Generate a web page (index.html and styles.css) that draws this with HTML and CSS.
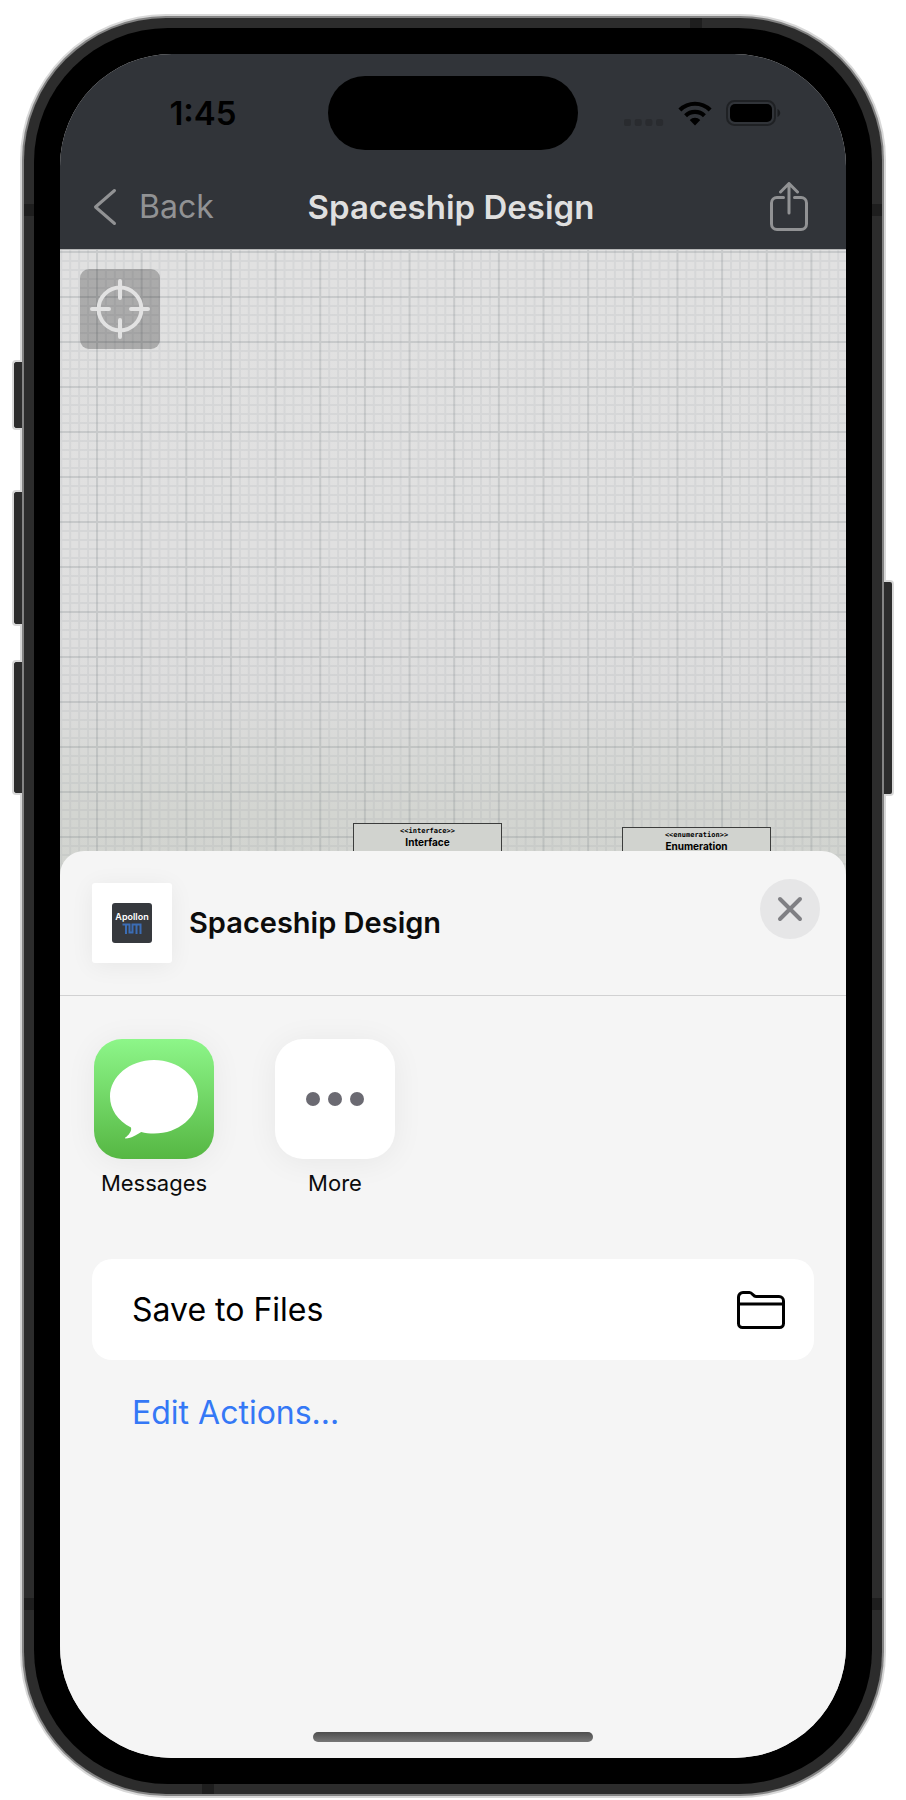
FILE: index.html
```html
<!DOCTYPE html>
<html lang="en">
<head>
<meta charset="utf-8">
<meta name="viewport" content="width=device-width, initial-scale=1">
<title>Spaceship Design</title>
<link rel="stylesheet" href="styles.css">
</head>
<body>
<div class="phone">
  <span class="key key-action"></span>
  <span class="key key-up"></span>
  <span class="key key-down"></span>
  <span class="key key-power"></span>
  <div class="rim"><div class="edge"><div class="frame">
    <span class="band band-left-top"></span>
    <span class="band band-right-top"></span>
    <span class="band band-left-bottom"></span>
    <span class="band band-right-bottom"></span>
    <span class="band band-top"></span>
    <span class="band band-bottom"></span>
    <div class="bezel"><div class="screen">
      <header class="topbar">
        <div class="status">
          <time class="clock">1:45</time>
          <span class="island"></span>
          <div class="indicators">
            <svg class="signal" viewBox="0 0 40 7" width="40" height="7" aria-hidden="true"><rect width="7" height="7" rx="2"/><rect x="10.7" width="7" height="7" rx="2"/><rect x="21.4" width="7" height="7" rx="2"/><rect x="32.1" width="7" height="7" rx="2"/></svg>
            <svg viewBox="0 0 34 25" width="34" height="25" aria-hidden="true"><path d="M.4 7.5A24 24 0 0 1 33.6 7.5L30.7 10.4A19.5 19.5 0 0 0 3.300 10.4ZM6.100 13.200A15.600 15.600 0 0 1 27.900 13.200L25 16.200A11.500 11.500 0 0 0 9 16.200ZM11.700 18.900A7.600 7.600 0 0 1 22.300 18.900L17 24.600Z"/></svg>
            <svg viewBox="0 0 55 26" width="55" height="26" aria-hidden="true"><rect x="1" y="1" width="48" height="24" rx="7.500" fill="none" stroke="#1f2124" stroke-width="2"/><rect x="4" y="4" width="42" height="18" rx="5"/><path d="M51.500 9v8c3.600-1.500 3.600-6.500 0-8z" fill="#1a1c1f"/></svg>
          </div>
        </div>
        <nav class="nav">
          <button class="back" type="button">
            <svg viewBox="0 0 24 38" width="24" height="38" aria-hidden="true"><path d="M21.500 2.500 2.500 19l19 16.500"/></svg>
            Back
          </button>
          <h1 class="title">Spaceship Design</h1>
          <button class="share" type="button" aria-label="Share">
            <svg viewBox="0 0 40 50" width="40" height="50" aria-hidden="true"><path d="M14.500 15.500H8A5.500 5.500 0 0 0 2.500 21v21A5.500 5.500 0 0 0 8 47.500h24a5.500 5.500 0 0 0 5.500-5.500V21A5.500 5.500 0 0 0 32 15.500h-6.500M20 31V2M11.500 10 20 1.500l8.500 8.500"/></svg>
          </button>
        </nav>
      </header>

      <main class="canvas">
        <svg class="grid" width="100%" height="100%" aria-hidden="true">
          <defs>
            <pattern id="minor" x="36" y="46" width="44.650" height="45" patternUnits="userSpaceOnUse"><path d="M0 10H45M0 19H45M0 28H45M0 37H45M9.930 0V45M18.860 0V45M27.790 0V45M36.720 0V45" stroke="#88929a" stroke-opacity=".13" stroke-width="2"/></pattern>
            <pattern id="major" x="36" y="46" width="44.650" height="45" patternUnits="userSpaceOnUse"><path d="M0 1H45M1 0V45" stroke="#7f888c" stroke-opacity=".26" stroke-width="2"/></pattern>
          </defs>
          <rect width="100%" height="100%" fill="url(#minor)"/>
          <rect width="100%" height="100%" fill="url(#major)"/>
        </svg>
        <button class="locate" type="button" aria-label="Center diagram">
          <svg viewBox="0 0 60 60" width="60" height="60" aria-hidden="true"><circle cx="30" cy="30" r="21.400"/><path d="M30 2v17M30 41v17M2 30h17M41 30h17"/></svg>
        </button>
        <div class="node node-interface"><span class="stereotype">&lt;&lt;interface&gt;&gt;</span><span class="name">Interface</span></div>
        <div class="node node-enumeration"><span class="stereotype">&lt;&lt;enumeration&gt;&gt;</span><span class="name">Enumeration</span></div>
      </main>

      <section class="sheet" aria-label="Share sheet">
        <div class="sheet-head">
          <div class="thumb"><div class="app-logo">
            <span class="app-name">Apollon</span>
            <svg viewBox="0 0 20 11" width="20" height="11" aria-label="TUM"><path d="M.5 1.500H7.500V9.500H10.500V1.500H18.500V11M4 1.500V11M14.500 1.500V11"/></svg>
          </div></div>
          <h2 class="sheet-title">Spaceship Design</h2>
          <button class="close" type="button" aria-label="Close">
            <svg viewBox="0 0 28 28" width="28" height="28" aria-hidden="true"><path d="M4 4l20 20M24 4 4 24"/></svg>
          </button>
        </div>
        <div class="apps">
          <button class="app" type="button">
            <span class="tile tile-messages"><svg viewBox="0 0 120 120" width="120" height="120" aria-hidden="true"><path d="M60 21c24.500 0 44 16.500 44 36.700S84.500 94.500 60 94.500c-4.500 0-8.800-.5-12.800-1.500C43 95.500 38 99 31.500 99.500c-.6 0-.7-.5-.2-.9 3.200-2.400 6.700-6.200 5.700-10.100C23.500 81.500 16 70 16 57.700 16 37.500 35.500 21 60 21z" fill="#fff"/></svg></span>
            Messages
          </button>
          <button class="app" type="button">
            <span class="tile"><svg viewBox="0 0 120 120" width="120" height="120" fill="#6b6a72" aria-hidden="true"><circle cx="38" cy="60" r="7"/><circle cx="60" cy="60" r="7"/><circle cx="82" cy="60" r="7"/></svg></span>
            More
          </button>
        </div>
        <div class="actions">
          <button class="save" type="button">
            Save to Files
            <svg viewBox="0 0 48 38" width="48" height="38" aria-hidden="true"><path d="M1.500 13V6A4.500 4.500 0 0 1 6 1.500h6.500c3 0 3.500 4 6.500 4h23a4.500 4.500 0 0 1 4.500 4.500v22.500a4 4 0 0 1-4 4h-37a4 4 0 0 1-4-4zM1.500 13h45"/></svg>
          </button>
          <button class="edit" type="button">Edit Actions...</button>
        </div>
        <div class="home"></div>
      </section>
    </div></div>
  </div></div></div>
</div>
</body>
</html>
```
FILE: styles.css
```css
* { box-sizing: border-box; }

body {
  margin: 0;
  background: #fff;
  font-family: Inter, "Liberation Sans", sans-serif;
}

button {
  margin: 0;
  padding: 0;
  border: 0;
  background: none;
  color: inherit;
  font: inherit;
  cursor: pointer;
}

svg { display: block; flex: none; }
h1, h2 { margin: 0; font-weight: 600; }

/* Device body */
.phone {
  position: relative;
  display: flex;
  min-height: 100vh;
  padding: 14px 20px 2px;
}

.rim, .edge, .frame, .bezel, .screen { display: flex; flex: 1; min-width: 0; }
.rim { padding: 2px; border-radius: 146px; background: #d8d8d8; }
.edge { padding: 2px; border-radius: 144px; background: #848484; }
.frame { position: relative; padding: 10px; border-radius: 142px; background: #2c2c2c; }
.bezel { position: relative; padding: 26px; border-radius: 134px; background: #000; }

.screen {
  flex-direction: column;
  border-radius: 112px;
  overflow: hidden;
  background: #dfdfdf;
}

.key {
  position: absolute;
  left: 12px;
  width: 10px;
  border: 2px solid #d8d8d8;
  border-right: 0;
  border-radius: 4px 0 0 4px;
  background: #2c2c2c;
}
.key-action { top: 360px; height: 70px; }
.key-up { top: 490px; height: 136px; }
.key-down { top: 660px; height: 135px; }
.key-power {
  top: 580px;
  right: 12px;
  left: auto;
  height: 216px;
  border-right: 2px solid #d8d8d8;
  border-left: 0;
  border-radius: 0 4px 4px 0;
}
.key { z-index: 1; }

.band { position: absolute; width: 12px; height: 12px; background: #1e1e1e; }
.band-left-top { top: 186px; left: 0; }
.band-right-top { top: 186px; right: 0; }
.band-left-bottom { bottom: 184px; left: 0; }
.band-right-bottom { right: 0; bottom: 184px; }
.band-top { top: 0; right: 180px; }
.band-bottom { bottom: 0; left: 178px; }

/* Status and navigation */
.topbar {
  flex: none;
  background: #313439;
}

.status {
  display: grid;
  grid-template-columns: 1fr 250px 1fr;
  align-items: center;
  padding-top: 22px;
}

.clock {
  padding-left: 18px;
  color: #000;
  font-size: 33px;
  font-weight: 600;
  line-height: 40px;
  text-align: center;
}

.island { height: 74px; border-radius: 37px; background: #000; }

.indicators {
  display: flex;
  align-items: center;
  gap: 14px;
  padding-left: 46px;
}
.signal { align-self: flex-end; fill: #292b2f; }

.nav {
  display: grid;
  grid-template-columns: 1fr auto 1fr;
  align-items: center;
  height: 99px;
  padding: 14px 37px 0 33px;
  color: #dfdfdf;
}

.back {
  display: flex;
  align-items: center;
  gap: 22px;
  justify-self: start;
  color: #919294;
  font-size: 32px;
  line-height: 40px;
}
.back svg, .share svg {
  fill: none;
  stroke: #919294;
  stroke-width: 3;
  stroke-linecap: round;
  stroke-linejoin: round;
}
.title { font-size: 33px; line-height: 40px; }
.share { justify-self: end; }

/* Diagram area */
.canvas {
  position: relative;
  flex: none;
  height: 626px;
  margin-bottom: -24px;
  padding: 19px 20px;
  border-top: 1px solid #b5b6b7;
  background: linear-gradient(#e1e1e1 0, #e0e0e0 300px, #dddddd 440px, #d3d5d1 560px, #d2d4d0);
}

.grid { position: absolute; inset: 0; }

.locate {
  position: relative;
  display: grid;
  place-items: center;
  width: 80px;
  height: 80px;
  border-radius: 9px;
  background: rgb(0 0 0 / 24%);
}
.locate svg { fill: none; stroke: #e2e2e2; stroke-width: 4; stroke-linecap: round; }

.node {
  position: absolute;
  display: flex;
  flex-direction: column;
  align-items: center;
  width: 149px;
  height: 60px;
  padding-top: 2px;
  border: 1px solid #3c3d3c;
  background: #d1d3cf;
  color: #000;
  font-weight: 700;
}
.node-interface { top: 573px; left: 293px; }
.node-enumeration { top: 577px; left: 562px; }
.stereotype { font-family: "DejaVu Sans Mono", monospace; font-size: 7px; line-height: 10px; }
.name { font-size: 10px; line-height: 12px; }

/* Share sheet */
.sheet {
  position: relative;
  display: flex;
  flex: 1;
  flex-direction: column;
  border-radius: 24px 24px 0 0;
  background: #f5f5f5;
}

.sheet-head {
  display: flex;
  align-items: center;
  gap: 17px;
  height: 145px;
  padding: 0 26px 0 32px;
  border-bottom: 1px solid #d1d1d2;
}

.thumb {
  display: grid;
  place-items: center;
  width: 80px;
  height: 80px;
  border-radius: 3px;
  background: #fff;
  box-shadow: 0 3px 24px rgb(0 0 0 / 6%);
}

.app-logo {
  display: flex;
  flex-direction: column;
  align-items: center;
  width: 40px;
  height: 40px;
  padding-top: 8px;
  border-radius: 3px;
  background: #36393e;
}
.app-logo svg { fill: none; stroke: #3b6db5; stroke-width: 2; }
.app-name { color: #fff; font-size: 9px; font-weight: 600; line-height: 12px; }

.sheet-title { flex: 1; color: #0c0c0c; font-size: 29px; line-height: 36px; }

.close {
  display: grid;
  place-items: center;
  align-self: flex-start;
  width: 60px;
  height: 60px;
  margin-top: 28px;
  border-radius: 50%;
  background: #e6e6e7;
}
.close svg { stroke: #808084; stroke-width: 4; stroke-linecap: round; }

.apps {
  display: flex;
  gap: 61px;
  padding: 43px 34px 0;
}

.app {
  display: flex;
  flex-direction: column;
  align-items: center;
  gap: 10px;
  width: 120px;
  color: #0c0c0c;
  font-size: 22px;
  line-height: 28px;
}

.tile {
  width: 120px;
  height: 120px;
  border-radius: 28px;
  background: #fff;
  box-shadow: 0 3px 32px rgb(0 0 0 / 6%);
}
.tile-messages { background: linear-gradient(#8df689, #56b743); }

.actions {
  display: flex;
  flex-direction: column;
  padding: 62px 32px 0;
  font-size: 32px;
  line-height: 40px;
}

.save {
  display: flex;
  align-items: center;
  justify-content: space-between;
  height: 101px;
  padding: 0 29px 0 40px;
  border-radius: 20px;
  background: #fff;
  color: #000;
}
.save svg { fill: none; stroke: #000; stroke-width: 3; stroke-linejoin: round; }

.edit {
  align-self: flex-start;
  margin-top: 33px;
  padding-left: 40px;
  color: #3478f6;
}

.home {
  align-self: center;
  width: 280px;
  height: 10px;
  margin-top: auto;
  margin-bottom: 16px;
  border-radius: 5px;
  background: linear-gradient(#4e4e4e, #777);
}
```
